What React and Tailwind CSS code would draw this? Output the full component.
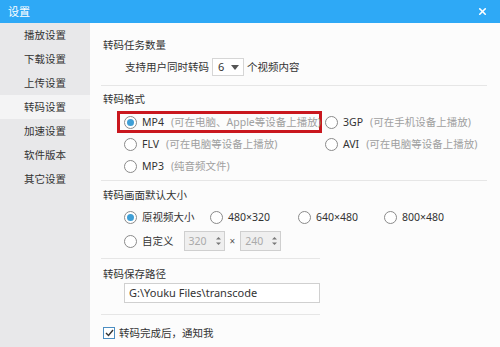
import { X } from 'lucide-react'

const FONT = { fontFamily: '"Noto Sans", "Noto Sans CJK SC", sans-serif' }

const MENU = ['播放设置', '下载设置', '上传设置', '转码设置', '加速设置', '软件版本', '其它设置']

function Radio({ checked }) {
  return (
    <span className="w-[13px] h-[13px] shrink-0 rounded-full border border-[#8a8a8a] bg-white flex items-center justify-center">
      {checked && <span className="w-[7px] h-[7px] rounded-full bg-[#3f9fd6]" />}
    </span>
  )
}

function Option({ checked, label, hint }) {
  return (
    <span className="flex items-center gap-[5px] whitespace-nowrap">
      <Radio checked={checked} />
      <span className="text-[#333]">{label}</span>
      {hint && <span className="text-[#a0a0a0] ml-[2px]">{hint}</span>}
    </span>
  )
}

function Spin({ value }) {
  return (
    <span className="w-[41px] h-[20px] border border-[#cfcfcf] bg-[#efefef] flex items-center">
      <span className="flex-1 pl-[4px] text-[#aaa]">{value}</span>
      <svg width="9" height="14" viewBox="0 0 9 14" className="mr-[1px]">
        <path d="M2 5.5 L4.5 3 L7 5.5 Z" fill="#777" />
        <path d="M2 8.5 L4.5 11 L7 8.5 Z" fill="#777" />
      </svg>
    </span>
  )
}

function Sep({ className = '' }) {
  return <div className={`h-px bg-[#e6e6e6] ml-[-2px] ${className}`} />
}

export default function App() {
  return (
    <div className="w-[500px] h-[347px] overflow-hidden flex flex-col bg-white text-[10.5px] leading-4" style={FONT}>
      <div className="h-[23px] shrink-0 bg-[#2ea9f6] flex items-center justify-between pl-[8px] pr-[12px] text-white">
        <span className="text-[11px]">设置</span>
        <X size={11} strokeWidth={3.5} />
      </div>

      <div className="flex flex-1 min-h-0">
        <div className="w-[90px] shrink-0 bg-[#e8e8ea] flex flex-col">
          {MENU.map((m, i) => (
            <div key={m} className={`h-[24px] flex items-center pl-[24px] text-[#333] ${i === 3 ? 'bg-[#f4f4f5]' : ''}`}>{m}</div>
          ))}
        </div>

        <div className="flex-1 pl-[13px] pr-[13px] bg-[#fcfcfc]">
          <div className="mt-[14px] h-4 flex items-center text-[#333]">转码任务数量</div>
          <div className="mt-[3px] h-[22px] flex items-center pl-[22px] text-[#333]">
            <span>支持用户同时转码</span>
            <span className="ml-[3px] w-[32px] h-[18px] border border-[#d6d6d6] bg-white flex items-center justify-between pl-[5px] pr-[4px]">
              <span className="text-[11px]">6</span>
              <svg width="8" height="5" viewBox="0 0 8 5"><path d="M0 0 H8 L4 5 Z" fill="#555" /></svg>
            </span>
            <span className="ml-[3px]">个视频内容</span>
          </div>
          <Sep className="mt-[7px]" />

          <div className="mt-[5px] h-4 flex items-center text-[#333]">转码格式</div>
          <div className="mt-[4px] ml-[14px] grid grid-cols-[205px_auto] gap-x-[3px]">
            <div className="h-[22px] border-[3px] border-[#c9171e] flex items-center pl-[4px]">
              <Option checked label="MP4" hint="(可在电脑、Apple等设备上播放)" />
            </div>
            <div className="h-[22px] flex items-center">
              <Option label="3GP" hint=" (可在手机设备上播放)" />
            </div>
            <div className="h-[22px] flex items-center pl-[7px]">
              <Option label="FLV" hint=" (可在电脑等设备上播放)" />
            </div>
            <div className="h-[22px] flex items-center">
              <Option label="AVI" hint=" (可在电脑等设备上播放)" />
            </div>
            <div className="h-[22px] flex items-center pl-[7px]">
              <Option label="MP3" hint="(纯音频文件)" />
            </div>
          </div>
          <Sep className="mt-[3px]" />

          <div className="mt-[6px] h-4 flex items-center text-[#333]">转码画面默认大小</div>
          <div className="mt-[3px] ml-[21px] h-[22px] grid grid-cols-[86px_88px_86px_86px] items-center">
            <Option checked label="原视频大小" />
            <Option label="480×320" />
            <Option label="640×480" />
            <Option label="800×480" />
          </div>
          <div className="mt-[2px] ml-[21px] h-[22px] flex items-center">
            <Option label="自定义" />
            <span className="ml-[10px]"><Spin value="320" /></span>
            <span className="mx-[5px] text-[#555] text-[10px]">×</span>
            <Spin value="240" />
          </div>

          <div className="w-[230px] ml-[-13px] pl-[13px]">
            <Sep className="mt-[6px]" />
            <div className="mt-[7px] h-4 flex items-center text-[#333]">转码保存路径</div>
            <div className="mt-[1px] ml-[21px] h-[20px] border border-[#d0d0d0] bg-white flex items-center pl-[4px] text-[#333] text-[11px] whitespace-nowrap overflow-hidden">
              G:\Youku Files\transcode
            </div>
            <Sep className="mt-[11px]" />
            <div className="mt-[10px] h-4 flex items-center gap-[4px] text-[#333]">
              <span className="w-[12px] h-[12px] border border-[#4c8ec2] bg-white flex items-center justify-center">
                <svg width="9" height="8" viewBox="0 0 9 8"><path d="M1 4 L3.5 6.5 L8 1" fill="none" stroke="#333" strokeWidth="1.4" /></svg>
              </span>
              <span>转码完成后，通知我</span>
            </div>
          </div>
        </div>
      </div>
    </div>
  )
}
